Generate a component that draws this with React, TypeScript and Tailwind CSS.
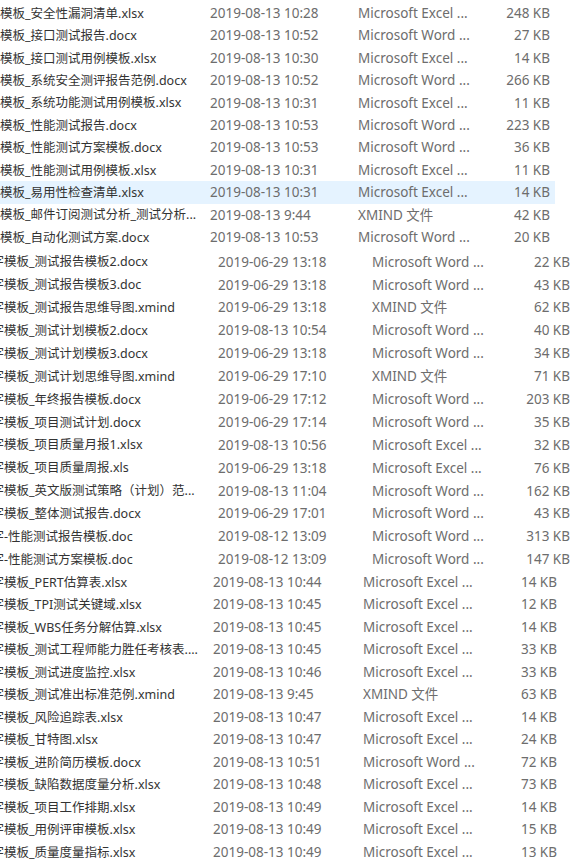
type Row = [string, string, string, string];

const groupA: Row[] = [
  ["模板_安全性漏洞清单.xlsx", "2019-08-13 10:28", "Microsoft Excel ...", "248 KB"],
  ["模板_接口测试报告.docx", "2019-08-13 10:52", "Microsoft Word ...", "27 KB"],
  ["模板_接口测试用例模板.xlsx", "2019-08-13 10:30", "Microsoft Excel ...", "14 KB"],
  ["模板_系统安全测评报告范例.docx", "2019-08-13 10:52", "Microsoft Word ...", "266 KB"],
  ["模板_系统功能测试用例模板.xlsx", "2019-08-13 10:31", "Microsoft Excel ...", "11 KB"],
  ["模板_性能测试报告.docx", "2019-08-13 10:53", "Microsoft Word ...", "223 KB"],
  ["模板_性能测试方案模板.docx", "2019-08-13 10:53", "Microsoft Word ...", "36 KB"],
  ["模板_性能测试用例模板.xlsx", "2019-08-13 10:31", "Microsoft Excel ...", "11 KB"],
  ["模板_易用性检查清单.xlsx", "2019-08-13 10:31", "Microsoft Excel ...", "14 KB"],
  ["模板_邮件订阅测试分析_测试分析...", "2019-08-13 9:44", "XMIND 文件", "42 KB"],
  ["模板_自动化测试方案.docx", "2019-08-13 10:53", "Microsoft Word ...", "20 KB"],
];

const groupB: Row[] = [
  ["字模板_测试报告模板2.docx", "2019-06-29 13:18", "Microsoft Word ...", "22 KB"],
  ["字模板_测试报告模板3.doc", "2019-06-29 13:18", "Microsoft Word ...", "43 KB"],
  ["字模板_测试报告思维导图.xmind", "2019-06-29 13:18", "XMIND 文件", "62 KB"],
  ["字模板_测试计划模板2.docx", "2019-08-13 10:54", "Microsoft Word ...", "40 KB"],
  ["字模板_测试计划模板3.docx", "2019-06-29 13:18", "Microsoft Word ...", "34 KB"],
  ["字模板_测试计划思维导图.xmind", "2019-06-29 17:10", "XMIND 文件", "71 KB"],
  ["字模板_年终报告模板.docx", "2019-06-29 17:12", "Microsoft Word ...", "203 KB"],
  ["字模板_项目测试计划.docx", "2019-06-29 17:14", "Microsoft Word ...", "35 KB"],
  ["字模板_项目质量月报1.xlsx", "2019-08-13 10:56", "Microsoft Excel ...", "32 KB"],
  ["字模板_项目质量周报.xls", "2019-06-29 13:18", "Microsoft Excel ...", "76 KB"],
  ["字模板_英文版测试策略（计划）范...", "2019-08-13 11:04", "Microsoft Word ...", "162 KB"],
  ["字模板_整体测试报告.docx", "2019-06-29 17:01", "Microsoft Word ...", "43 KB"],
  ["字-性能测试报告模板.doc", "2019-08-12 13:09", "Microsoft Word ...", "313 KB"],
  ["字-性能测试方案模板.doc", "2019-08-12 13:09", "Microsoft Word ...", "147 KB"],
];

const groupC: Row[] = [
  ["字模板_PERT估算表.xlsx", "2019-08-13 10:44", "Microsoft Excel ...", "14 KB"],
  ["字模板_TPI测试关键域.xlsx", "2019-08-13 10:45", "Microsoft Excel ...", "12 KB"],
  ["字模板_WBS任务分解估算.xlsx", "2019-08-13 10:45", "Microsoft Excel ...", "14 KB"],
  ["字模板_测试工程师能力胜任考核表....", "2019-08-13 10:45", "Microsoft Excel ...", "33 KB"],
  ["字模板_测试进度监控.xlsx", "2019-08-13 10:46", "Microsoft Excel ...", "33 KB"],
  ["字模板_测试准出标准范例.xmind", "2019-08-13 9:45", "XMIND 文件", "63 KB"],
  ["字模板_风险追踪表.xlsx", "2019-08-13 10:47", "Microsoft Excel ...", "14 KB"],
  ["字模板_甘特图.xlsx", "2019-08-13 10:47", "Microsoft Excel ...", "24 KB"],
  ["字模板_进阶简历模板.docx", "2019-08-13 10:51", "Microsoft Word ...", "72 KB"],
  ["字模板_缺陷数据度量分析.xlsx", "2019-08-13 10:48", "Microsoft Excel ...", "73 KB"],
  ["字模板_项目工作排期.xlsx", "2019-08-13 10:49", "Microsoft Excel ...", "14 KB"],
  ["字模板_用例评审模板.xlsx", "2019-08-13 10:49", "Microsoft Excel ...", "15 KB"],
  ["字模板_质量度量指标.xlsx", "2019-08-13 10:49", "Microsoft Excel ...", "13 KB"],
];

function Name({ text, cut }: { text: string; cut: boolean }) {
  // the later screenshots were cropped through the first character
  if (!cut) return <span className="whitespace-nowrap text-[12.5px] text-[#333]">{text}</span>;
  return (
    <span className="whitespace-nowrap text-[12.5px] text-[#333]">
      <span className="ml-[-8.5px]">{text[0]}</span>
      {text.slice(1)}
    </span>
  );
}

export default function App() {
  return (
    <main
      className="w-[571px] h-[864px] overflow-hidden bg-white text-[13.5px] text-[#6d6d6d]"
      style={{ fontFamily: '"Noto Sans", "Noto Sans CJK SC", sans-serif' }}
    >
      {/* first capture */}
      <div className="flex flex-col pt-[2px]">
        {groupA.map((r, i) => (
          <div
            key={i}
            className={`flex items-center h-[22.4px] w-[555px] ${i === 8 ? "bg-[#e5f3ff]" : ""}`}
          >
            <div className="w-[210px] shrink-0 overflow-hidden">
              <Name text={r[0]} cut={false} />
            </div>
            <div className="w-[148px] shrink-0 whitespace-nowrap">{r[1]}</div>
            <div className="w-[142px] shrink-0 whitespace-nowrap">{r[2]}</div>
            <div className="w-[50px] shrink-0 text-right whitespace-nowrap">{r[3]}</div>
          </div>
        ))}
      </div>

      {/* second capture */}
      <div className="flex flex-col mt-[2px]">
        {groupB.map((r, i) => (
          <div key={i} className="flex items-center h-[22.9px]">
            <div className="w-[218px] shrink-0 overflow-hidden">
              <Name text={r[0]} cut />
            </div>
            <div className="w-[154px] shrink-0 whitespace-nowrap">{r[1]}</div>
            <div className="w-[147px] shrink-0 whitespace-nowrap">{r[2]}</div>
            <div className="w-[51px] shrink-0 text-right whitespace-nowrap">{r[3]}</div>
          </div>
        ))}
      </div>

      {/* third capture */}
      <div className="flex flex-col">
        {groupC.map((r, i) => (
          <div key={i} className="flex items-center h-[22.5px]">
            <div className="w-[213px] shrink-0 overflow-hidden">
              <Name text={r[0]} cut />
            </div>
            <div className="w-[150px] shrink-0 whitespace-nowrap">{r[1]}</div>
            <div className="w-[144px] shrink-0 whitespace-nowrap">{r[2]}</div>
            <div className="w-[50px] shrink-0 text-right whitespace-nowrap">{r[3]}</div>
          </div>
        ))}
      </div>
    </main>
  );
}
